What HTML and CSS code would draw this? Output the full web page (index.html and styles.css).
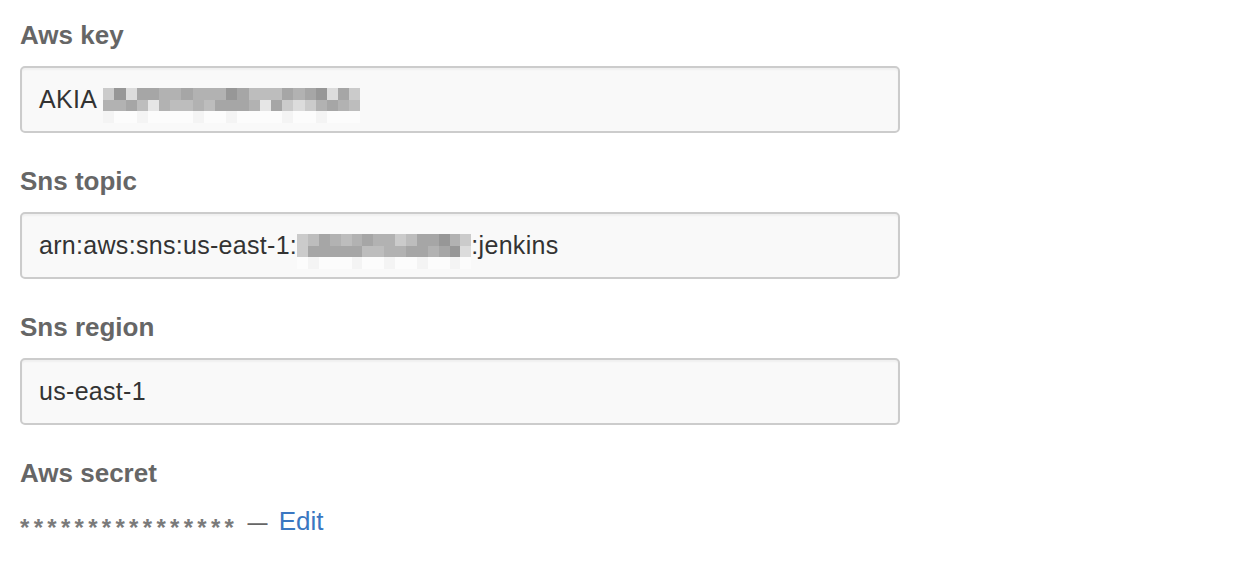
FILE: index.html
```html
<!DOCTYPE html>
<html lang="en">
  <head>
    <meta charset="UTF-8" />
    <meta name="viewport" content="width=device-width, initial-scale=1.0" />
    <title>SNS notifier settings</title>
    <link rel="stylesheet" href="styles.css">
  </head>
  <body>
    <div class="settings">
      <div class="form-group">
        <label class="label">Aws key</label>
        <div class="field">
          <span>AKIA</span>
          <span class="mosaic mosaic-key">
            <i class="c5"></i><i class="c1"></i><i class="c6"></i><i class="c2"></i><i class="c2"></i><i class="c3"></i><i class="c3"></i><i class="c2"></i><i class="c3"></i><i class="c3"></i><i class="c3"></i><i class="c1"></i><i class="c2"></i><i class="c4"></i><i class="c4"></i><i class="c4"></i><i class="c2"></i><i class="c3"></i><i class="c2"></i><i class="c1"></i><i class="c6"></i><i class="c2"></i><i class="c5"></i>
            <i class="c3"></i><i class="c3"></i><i class="c2"></i><i class="c4"></i><i class="c7"></i><i class="c3"></i><i class="c4"></i><i class="c4"></i><i class="c3"></i><i class="c4"></i><i class="c2"></i><i class="c2"></i><i class="c2"></i><i class="c3"></i><i class="c7"></i><i class="c2"></i><i class="c5"></i><i class="c6"></i><i class="c5"></i><i class="c3"></i><i class="c2"></i><i class="c3"></i><i class="c4"></i>
            <i class="c8"></i><i class="c9"></i><i class="c9"></i><i class="c8"></i><i class="c9"></i><i class="c9"></i><i class="c9"></i><i class="c9"></i><i class="c8"></i><i class="c9"></i><i class="c9"></i><i class="c8"></i><i class="c9"></i><i class="c9"></i><i class="c9"></i><i class="c9"></i><i class="c8"></i><i class="c9"></i><i class="c9"></i><i class="c8"></i><i class="c9"></i><i class="c9"></i><i class="c9"></i>
          </span>
        </div>
      </div>

      <div class="form-group">
        <label class="label">Sns topic</label>
        <div class="field">
          <span>arn:aws:sns:us-east-1:</span>
          <span class="mosaic mosaic-topic">
            <i class="c5"></i><i class="c4"></i><i class="c2"></i><i class="c3"></i><i class="c4"></i><i class="c3"></i><i class="c2"></i><i class="c3"></i><i class="c3"></i><i class="c5"></i><i class="c4"></i><i class="c2"></i><i class="c2"></i><i class="c1"></i><i class="c3"></i><i class="c5"></i>
            <i class="c5"></i><i class="c2"></i><i class="c2"></i><i class="c2"></i><i class="c2"></i><i class="c2"></i><i class="c4"></i><i class="c4"></i><i class="c3"></i><i class="c3"></i><i class="c2"></i><i class="c2"></i><i class="c3"></i><i class="c2"></i><i class="c1"></i><i class="c6"></i>
            <i class="c9"></i><i class="c8"></i><i class="c9"></i><i class="c9"></i><i class="c9"></i><i class="c8"></i><i class="c9"></i><i class="c9"></i><i class="c8"></i><i class="c9"></i><i class="c9"></i><i class="c8"></i><i class="c9"></i><i class="c9"></i><i class="c8"></i><i class="c9"></i>
          </span>
          <span>:jenkins</span>
        </div>
      </div>

      <div class="form-group">
        <label class="label">Sns region</label>
        <div class="field">us-east-1</div>
      </div>

      <div class="form-group">
        <label class="label">Aws secret</label>
        <div class="secret-row">
          <span class="stars">****************</span>
          <span class="dash">&mdash;</span>
          <a class="edit-link" href="#">Edit</a>
        </div>
      </div>
    </div>
  </body>
</html>
```

FILE: styles.css
```css
* {
  box-sizing: border-box;
  margin: 0;
  padding: 0;
}

body {
  background: #fff;
  color: #333;
  font-family: 'Liberation Sans', Arial, Helvetica, sans-serif;
}

.settings {
  padding: 20px 20px;
}

.form-group + .form-group {
  margin-top: 33px;
}

.label {
  display: block;
  color: #666;
  font-size: 26px;
  font-weight: bold;
  line-height: 30px;
  margin-bottom: 16px;
}

.field {
  display: flex;
  align-items: center;
  width: 880px;
  height: 67px;
  padding: 0 17px;
  background: #f9f9f9;
  border: 2px solid #ccc;
  border-radius: 5px;
  box-shadow: inset 0 2px 2px rgba(0, 0, 0, 0.04);
  color: #333;
  font-size: 25px;
  letter-spacing: 0.3px;
  white-space: nowrap;
}

.mosaic {
  display: grid;
  grid-auto-rows: 11.5px;
  margin-top: 11.5px;
}

.mosaic-key {
  grid-template-columns: repeat(23, 11.2px);
  margin-left: 6px;
}

.mosaic-topic {
  grid-template-columns: repeat(16, 10.9px);
}

.mosaic i {
  display: block;
}

.c1 { background: #979797; }
.c2 { background: #a6a6a6; }
.c3 { background: #b2b2b2; }
.c4 { background: #bdbdbd; }
.c5 { background: #cbcbcb; }
.c6 { background: #dcdcdc; }
.c7 { background: #e6e6e6; }
.c8 { background: #f4f4f4; }
.c9 { background: #fcfcfc; }

.secret-row {
  color: #666;
  font-size: 26px;
  line-height: 30px;
  margin-top: 18px;
  white-space: nowrap;
}

.stars {
  color: #7a7a7a;
  font-size: 24px;
  font-weight: bold;
  letter-spacing: 4.3px;
  vertical-align: -6px;
}

.dash {
  display: inline-block;
  font-size: 20px;
  font-weight: bold;
  margin-left: 2px;
  transform: scaleY(0.8);
}

.edit-link {
  color: #3a77c1;
  margin-left: 4px;
  text-decoration: none;
}
```
